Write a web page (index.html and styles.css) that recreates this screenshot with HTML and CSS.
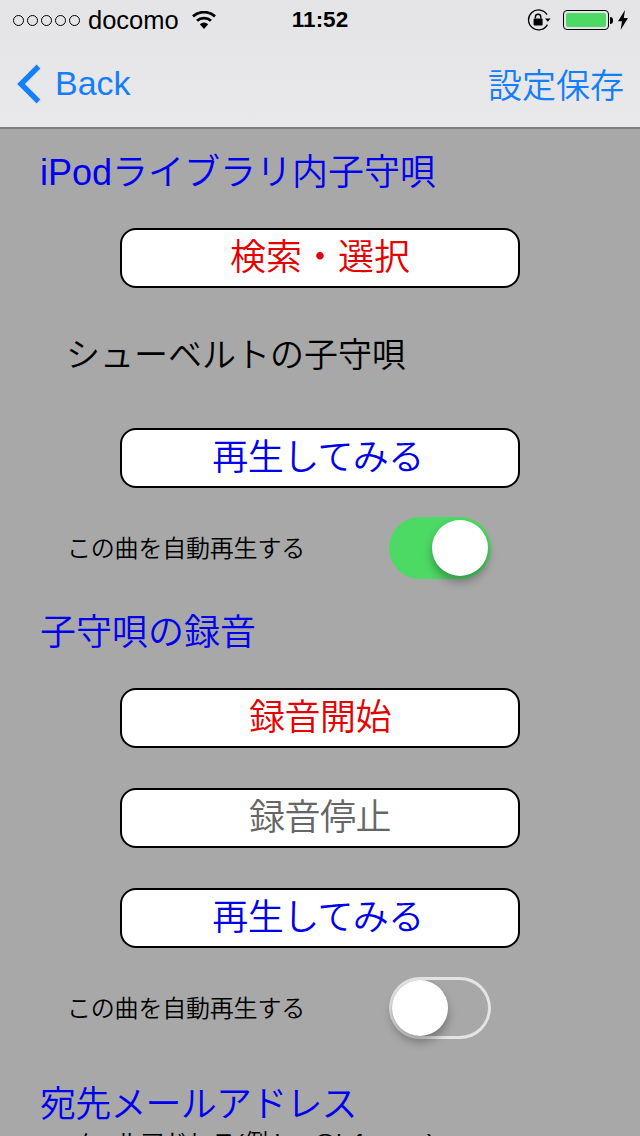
FILE: index.html
```html
<!DOCTYPE html>
<html lang="ja">
<head>
    <meta charset="UTF-8">
    <meta name="viewport" content="width=device-width, initial-scale=1.0">
    <title>子守唄の設定</title>
    <link rel="stylesheet" href="styles.css">
</head>
<body>
    <header class="top-bar">
        <div class="status-bar">
            <div class="status-left">
                <span class="signal"><i></i><i></i><i></i><i></i><i></i></span>
                <span class="carrier">docomo</span>
                <svg class="wifi" viewBox="0 0 24 18" width="24" height="18">
                    <path d="M12 18 7.8 13.2a6.2 6.2 0 0 1 8.4 0Z" fill="#000"/>
                    <path d="M5 9.8a10.4 10.4 0 0 1 14 0" fill="none" stroke="#000" stroke-width="2.8"/>
                    <path d="M1 5.4a16.4 16.4 0 0 1 22 0" fill="none" stroke="#000" stroke-width="2.8"/>
                </svg>
            </div>
            <div class="clock">11:52</div>
            <div class="status-right">
                <svg class="lock" viewBox="0 0 24 22" width="24" height="22">
                    <path d="M20.4 15.6A10 10 0 1 1 20 5.6" fill="none" stroke="#000" stroke-width="1.3"/>
                    <path d="M18 9.4h5.6l-2.8 3.4Z" fill="#000"/>
                    <rect x="6.6" y="9.6" width="9" height="7" rx="1" fill="#000"/>
                    <path d="M8.4 9.6V8a2.7 2.7 0 0 1 5.4 0v1.6" fill="none" stroke="#000" stroke-width="1.4"/>
                </svg>
                <div class="battery"><div class="battery-fill"></div></div>
                <div class="battery-tip"></div>
                <svg class="bolt" viewBox="0 0 10 20" width="10" height="20">
                    <path d="M7 0 0 11.2h4L2.6 20 10 8H5.8Z" fill="#000"/>
                </svg>
            </div>
        </div>
        <nav class="nav-bar">
            <a class="back">
                <svg viewBox="0 0 26 40" width="26" height="40">
                    <path d="M22.5 2.5 5 20l17.5 17.5" fill="none" stroke="#147efb" stroke-width="5.4"/>
                </svg>
                <span>Back</span>
            </a>
            <a class="save">設定保存</a>
        </nav>
    </header>

    <main class="content">
        <h2 class="heading first">iPodライブラリ内子守唄</h2>
        <button class="btn red gap-small">検索・選択</button>
        <p class="song">シューベルトの子守唄</p>
        <button class="btn blue kana gap-song">再生してみる</button>
        <div class="switch-row">
            <span>この曲を自動再生する</span>
            <div class="switch on"><div class="knob"></div></div>
        </div>

        <h2 class="heading second">子守唄の録音</h2>
        <button class="btn red tight gap-small">録音開始</button>
        <button class="btn gray tight gap-btn">録音停止</button>
        <button class="btn blue kana gap-btn">再生してみる</button>
        <div class="switch-row">
            <span>この曲を自動再生する</span>
            <div class="switch"><div class="knob"></div></div>
        </div>

        <h2 class="heading third">宛先メールアドレス</h2>
        <p class="mail-note">メールアドレス(例 kaz@lafa.com)</p>
    </main>
</body>
</html>
```

FILE: styles.css
```css
* {
    box-sizing: border-box;
}

html, body {
    height: 1136px;
    overflow: hidden;
}

body {
    margin: 0;
    background-color: #a8a8a8;
    color: #000;
    font-family: 'Liberation Sans', 'Noto Sans CJK JP', sans-serif;
    font-weight: 350;
}

.top-bar {
    height: 129px;
    background: linear-gradient(to bottom, #e4e4e6, #e9e9eb);
    border-bottom: 2px solid #7e7e7e;
}

.status-bar {
    height: 40px;
    display: grid;
    grid-template-columns: 1fr auto 1fr;
    align-items: center;
    font-size: 25.5px;
}

.status-left {
    display: flex;
    align-items: center;
    padding-left: 13px;
}

.signal {
    display: flex;
    gap: 3px;
}

.signal i {
    width: 11px;
    height: 11px;
    border: 1px solid #000;
    border-radius: 50%;
}

.carrier {
    margin-left: 8px;
}

.wifi {
    margin-left: 13px;
}

.clock {
    font-weight: bold;
    font-size: 22.5px;
}

.status-right {
    display: flex;
    align-items: center;
    justify-content: flex-end;
    padding-right: 12px;
}

.battery {
    width: 46px;
    height: 20px;
    margin-left: 12px;
    padding: 2px;
    border: 1px solid #000;
    border-radius: 4px;
}

.battery-fill {
    height: 100%;
    background-color: #4cd964;
    border-radius: 2px;
}

.battery-tip {
    width: 3px;
    height: 7px;
    margin-left: 1px;
    background-color: #000;
    border-radius: 0 3px 3px 0;
}

.bolt {
    margin-left: 5px;
}

.nav-bar {
    height: 87px;
    display: flex;
    align-items: center;
    justify-content: space-between;
    padding: 0 16px;
    color: #147efb;
    font-size: 34px;
}

.back {
    display: flex;
    align-items: center;
    gap: 13px;
}

.back svg {
    display: block;
}

.content {
    display: flex;
    flex-direction: column;
    align-items: flex-start;
}

.heading {
    height: 44px;
    margin: 0;
    padding-left: 40px;
    color: #0000f0;
    font-size: 36px;
    font-weight: 350;
    line-height: 44px;
    white-space: nowrap;
}

.heading.first {
    margin-top: 22px;
}

.heading.second {
    margin-top: 32px;
}

.heading.third {
    margin-top: 44px;
    letter-spacing: -0.8px;
}

.btn {
    width: 400px;
    height: 60px;
    margin-left: 120px;
    padding: 0;
    background-color: #fff;
    border: 2px solid #000;
    border-radius: 16px;
    font-family: inherit;
    font-size: 36px;
    font-weight: 350;
    line-height: 56px;
}

.btn.kana {
    padding-right: 4px;
    letter-spacing: -0.6px;
}

.btn.tight {
    letter-spacing: -0.5px;
}

.btn.red {
    color: #e60000;
}

.btn.blue {
    color: #0000f0;
}

.btn.gray {
    color: #666;
}

.gap-small {
    margin-top: 33px;
}

.gap-song {
    margin-top: 53px;
}

.gap-btn {
    margin-top: 40px;
}

.song {
    height: 40px;
    margin: 47px 0 0 66px;
    font-size: 34px;
    line-height: 40px;
    white-space: nowrap;
}

.switch-row {
    width: 491px;
    height: 62px;
    margin-top: 29px;
    padding-left: 67px;
    display: flex;
    align-items: center;
    justify-content: space-between;
    font-size: 24px;
}

.switch-row span {
    padding-bottom: 4px;
    letter-spacing: -0.2px;
}

.switch {
    width: 102px;
    height: 62px;
    padding: 3px;
    display: flex;
    border-radius: 31px;
    box-shadow: inset 0 0 0 3px #e4e4e4;
}

.switch.on {
    justify-content: flex-end;
    background-color: #4cd964;
    box-shadow: none;
}

.knob {
    width: 56px;
    height: 56px;
    background-color: #fff;
    border-radius: 50%;
    box-shadow: 0 6px 10px rgba(0, 0, 0, 0.3);
}

.mail-note {
    height: 30px;
    margin: 1px 0 0 68px;
    font-size: 24px;
    line-height: 30px;
    white-space: nowrap;
}
```
